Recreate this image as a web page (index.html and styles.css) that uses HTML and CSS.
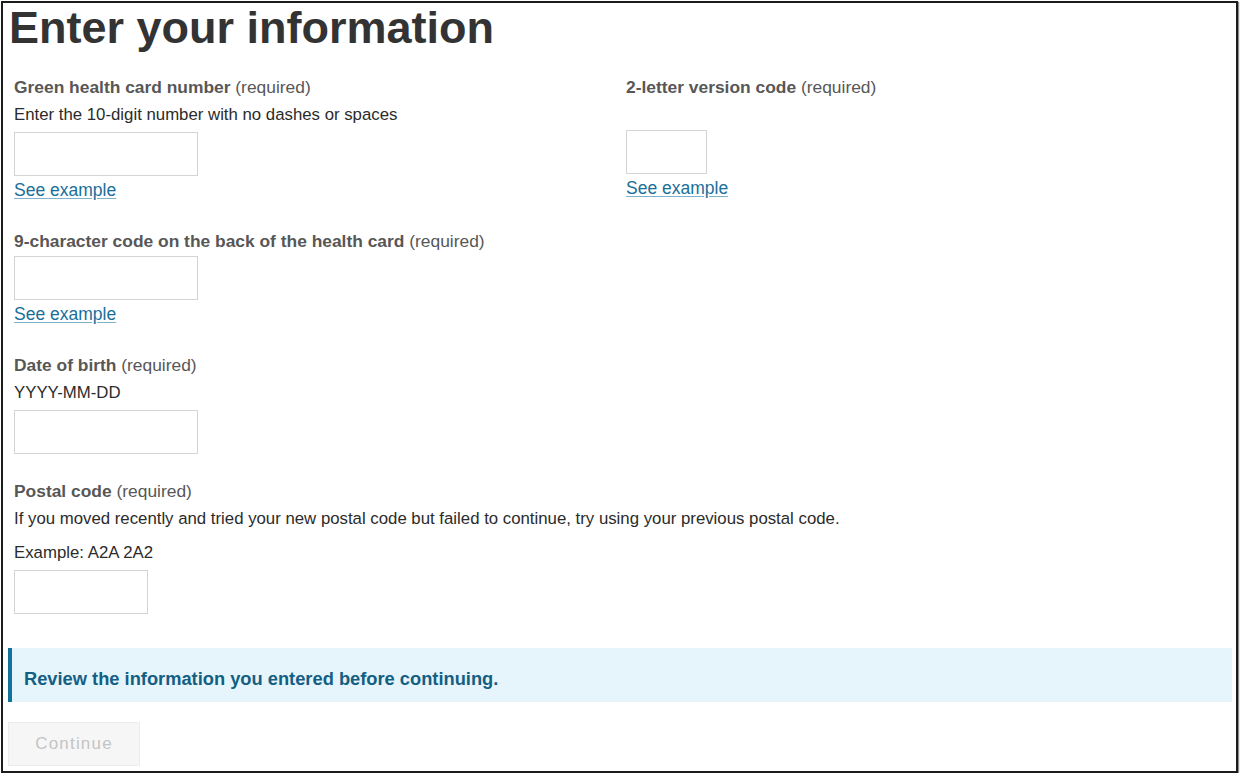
FILE: index.html
```html
<!DOCTYPE html>
<html lang="en">
<head>
    <meta charset="UTF-8">
    <meta name="viewport" content="width=device-width, initial-scale=1.0">
    <title>Enter your information</title>
    <link rel="stylesheet" href="styles.css">
</head>
<body>
    <div class="frame">
        <h1>Enter your information</h1>

        <form class="card-form" onsubmit="return false;">
            <div class="form-row">
                <div class="field">
                    <label for="cardNumber">Green health card number <span class="req">(required)</span></label>
                    <p class="hint">Enter the 10-digit number with no dashes or spaces</p>
                    <input type="text" id="cardNumber" class="input-wide">
                    <a class="example-link" href="#">See example</a>
                </div>
                <div class="field">
                    <label for="versionCode">2-letter version code <span class="req">(required)</span></label>
                    <div class="hint-space"></div>
                    <input type="text" id="versionCode" class="input-tiny">
                    <a class="example-link" href="#">See example</a>
                </div>
            </div>

            <div class="field stacked">
                <label for="backCode">9-character code on the back of the health card <span class="req">(required)</span></label>
                <input type="text" id="backCode" class="input-wide">
                <a class="example-link" href="#">See example</a>
            </div>

            <div class="field stacked">
                <label for="dob">Date of birth <span class="req">(required)</span></label>
                <p class="hint">YYYY-MM-DD</p>
                <input type="text" id="dob" class="input-wide">
            </div>

            <div class="field stacked field-postal">
                <label for="postal">Postal code <span class="req">(required)</span></label>
                <p class="hint">If you moved recently and tried your new postal code but failed to continue, try using your previous postal code.</p>
                <p class="hint hint-example">Example: A2A 2A2</p>
                <input type="text" id="postal" class="input-small">
            </div>

            <div class="notice">Review the information you entered before continuing.</div>

            <button type="submit" class="continue-btn" disabled>Continue</button>
        </form>
    </div>
</body>
</html>
```

FILE: styles.css
```css
body {
    margin: 0;
    background: #fff;
    font-family: "Liberation Sans", Arial, Helvetica, sans-serif;
    color: #333;
}
.frame {
    box-sizing: border-box;
    width: 1237px;
    height: 772px;
    margin: 1px 0 0 1px;
    padding: 0 4px 0 5px;
    border: 2px solid #1c1c1c;
    box-shadow: 1px 1px 1px rgba(0, 0, 0, 0.45);
    background: #fff;
}
h1 {
    margin: 0;
    padding-left: 1px;
    font-size: 45px;
    line-height: 50px;
    font-weight: bold;
    color: #333;
}
.card-form {
    margin-top: 23px;
}
.form-row {
    display: grid;
    grid-template-columns: 612px 1fr;
    align-items: start;
}
.field {
    display: flex;
    flex-direction: column;
    align-items: flex-start;
    padding-left: 6px;
}
.stacked {
    margin-top: 29px;
}
.field-postal {
    margin-top: 26px;
}
label {
    display: block;
    margin-bottom: 4px;
    font-size: 17.4px;
    line-height: 22px;
    font-weight: bold;
    color: #575757;
}
.req {
    font-weight: normal;
}
.hint {
    margin: 2px 0 6px;
    font-size: 16.8px;
    line-height: 22px;
    color: #2b2b2b;
}
.hint-example {
    margin-top: 6px;
}
.hint-space {
    height: 28px;
}
input[type="text"] {
    box-sizing: border-box;
    height: 44px;
    margin: 0;
    padding: 6px 10px;
    border: 1px solid #d4d4d4;
    border-radius: 0;
    background: #fff;
    font: inherit;
    outline: none;
}
.input-wide {
    width: 184px;
}
.input-tiny {
    width: 81px;
}
.input-small {
    width: 134px;
}
.example-link {
    display: block;
    margin-top: 3px;
    font-size: 17.5px;
    line-height: 22px;
    color: #1a6f9a;
    text-decoration: underline;
    text-decoration-color: #7fb3cc;
    text-underline-offset: 2px;
}
.notice {
    box-sizing: border-box;
    height: 54px;
    margin-top: 34px;
    padding: 8px 12px 0;
    display: flex;
    align-items: center;
    border-left: 4px solid #127399;
    background: #e6f4fb;
    font-size: 18.3px;
    font-weight: bold;
    color: #135f84;
}
.continue-btn {
    display: block;
    width: 132px;
    height: 44px;
    margin-top: 20px;
    padding: 0;
    border: 1px solid #ececec;
    background: #f6f6f6;
    color: #c4c4c4;
    font-family: inherit;
    font-size: 17px;
    letter-spacing: 1.2px;
    cursor: default;
}
```
